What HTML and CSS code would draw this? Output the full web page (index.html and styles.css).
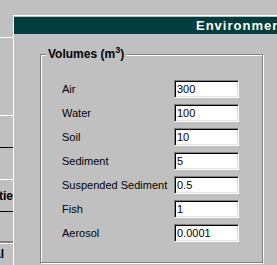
FILE: index.html
```html
<!DOCTYPE html>
<html>
<head>
<meta charset="utf-8">
<link rel="stylesheet" href="styles.css">
</head>
<body>
<div class="screen">
  <div class="side">
    <div class="srow r1"></div>
    <div class="srow r2"></div>
    <div class="srow r3"></div>
    <div class="srow r4"></div>
    <div class="srow r5"><span class="stext">Quantitie</span></div>
    <div class="srow r6"></div>
    <div class="srow r7"><span class="stext2">Total</span></div>
  </div>
  <div class="main">
    <div class="titlebar">Environment</div>
    <div class="group">
      <span class="legend">Volumes (m<sup>3</sup>)</span>
      <div class="fields">
        <label class="lbl">Air</label><input class="box" type="text" value="300">
        <label class="lbl">Water</label><input class="box" type="text" value="100">
        <label class="lbl">Soil</label><input class="box" type="text" value="10">
        <label class="lbl">Sediment</label><input class="box" type="text" value="5">
        <label class="lbl">Suspended Sediment</label><input class="box" type="text" value="0.5">
        <label class="lbl">Fish</label><input class="box" type="text" value="1">
        <label class="lbl">Aerosol</label><input class="box" type="text" value="0.0001">
      </div>
    </div>
  </div>
</div>
</body>
</html>
```
FILE: styles.css
```css
html, body {
  margin: 0;
  padding: 0;
  background: #c0c0c0;
}
body {
  width: 277px;
  height: 265px;
  overflow: hidden;
  font-family: "Liberation Sans", Arial, sans-serif;
  font-size: 11px;
  color: #000;
}
.screen {
  display: flex;
  width: 277px;
  height: 265px;
}
.side {
  width: 13px;
  flex: none;
  overflow: hidden;
}
.srow {
  box-sizing: border-box;
  overflow: hidden;
}
.r1 { height: 38px; border-bottom: 1px solid #fff; }
.r2 { height: 78px; border-bottom: 1px solid #fff; }
.r3 { height: 32px; border-bottom: 1px solid #000; }
.r4 { height: 32px; border-bottom: 1px solid #fff; }
.r5 {
  height: 32px;
  border-bottom: 1px solid #000;
  display: flex;
  justify-content: flex-end;
  align-items: center;
}
.r6 { height: 32px; border-bottom: 1px solid #fff; box-shadow: inset 0 -2px 0 #808080; }
.r7 {
  height: 22px;
  display: flex;
  justify-content: flex-end;
  padding-right: 9px;
  padding-top: 3px;
}
.stext, .stext2 {
  font-weight: bold;
  font-size: 12px;
  white-space: nowrap;
}
.main {
  flex: 1;
  margin-top: 15px;
  border-top: 1px solid #fff;
  border-left: 1px solid #fff;
  padding-top: 1px;
  overflow: hidden;
}
.titlebar {
  height: 17px;
  line-height: 17px;
  background: #003e3e;
  color: #fff;
  font-weight: bold;
  font-size: 13px;
  letter-spacing: 1px;
  padding-left: 182px;
  white-space: nowrap;
  overflow: hidden;
}
.group {
  position: relative;
  box-sizing: border-box;
  margin-top: 20px;
  margin-left: 26px;
  width: 223px;
  height: 209px;
  border: 1px solid #808080;
  box-shadow: inset 1px 1px 0 #fff, 1px 1px 0 #fff;
  padding-top: 25px;
  padding-left: 21px;
}
.legend {
  position: absolute;
  top: -8px;
  left: 5px;
  padding: 0 2px;
  background: #c0c0c0;
  font-weight: bold;
  font-size: 12px;
  line-height: 15px;
  white-space: nowrap;
}
.legend sup {
  font-size: 9px;
  line-height: 0;
}
.fields {
  display: grid;
  grid-template-columns: 112px 65px;
  grid-auto-rows: 18px;
  row-gap: 6px;
  align-items: center;
}
.lbl {
  white-space: nowrap;
}
.box {
  box-sizing: border-box;
  width: 65px;
  height: 18px;
  margin: 0;
  padding: 0 2px;
  border-style: solid;
  border-width: 1px;
  border-color: #808080 #fff #fff #808080;
  box-shadow: inset 1px 1px 0 #000, inset -1px -1px 0 #dfdfdf;
  background: #fff;
  font-family: "Liberation Sans", Arial, sans-serif;
  font-size: 11px;
  color: #000;
  outline: none;
}
```
